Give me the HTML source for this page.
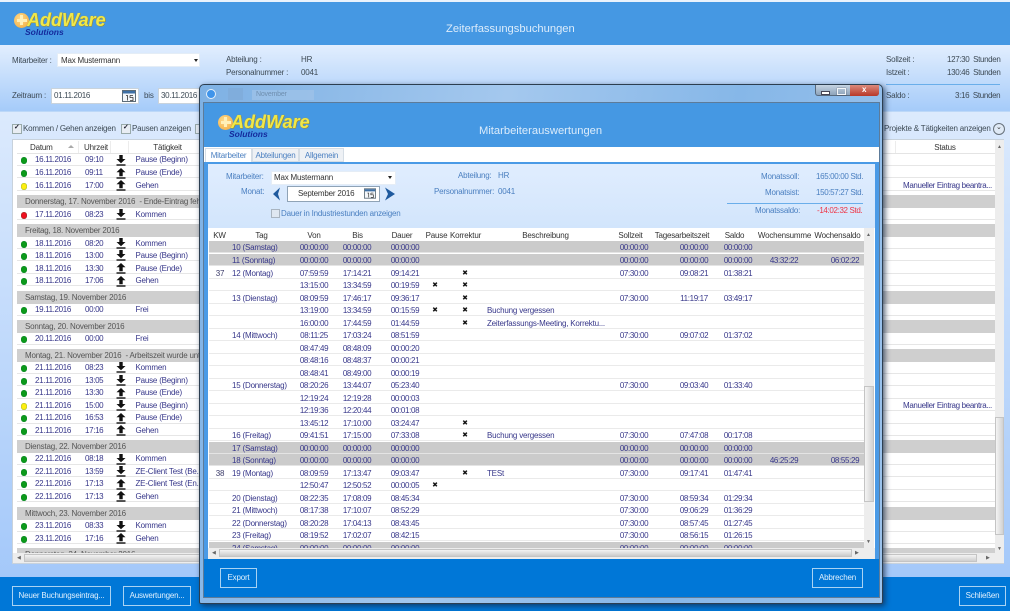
<!DOCTYPE html>
<html lang="de"><head><meta charset="utf-8"><title>Zeiterfassungsbuchungen</title>
<style>
html,body{margin:0;padding:0;width:1010px;height:611px;overflow:hidden;background:#a6ccfa}
#w{position:absolute;left:0;top:0;width:1010px;height:611px;overflow:hidden;filter:blur(.35px);font:8px/14px "Liberation Sans",sans-serif;letter-spacing:-.2px;color:#333;background:linear-gradient(#e9f2fe,#a0c6f9)}
#w div,#w span,#w svg,#w i,#w u{position:absolute}
#w span{white-space:nowrap}
i,u{font-style:normal;text-decoration:none}
.lb{color:#3d4a55}
.nm{letter-spacing:-.35px}
.btn{border:1px solid #a9d3f3;color:#dff0fd;text-align:center;box-sizing:border-box;background:#0077d7;font-size:8px;line-height:18px}
.ttl{color:#dcecfb;font-size:11.2px;line-height:16px;letter-spacing:0}
.lg1{font:italic bold 18px/20px "Liberation Sans",sans-serif;letter-spacing:0;color:#efe84a;text-shadow:.5px .5px 0 #a98a18,0 0 1px #b79a20}
.lg2{font:italic bold 8.5px/10px "Liberation Sans",sans-serif;letter-spacing:0;color:#142a9c}
.pl{width:15px;height:15px;border-radius:50%;background:radial-gradient(circle at 40% 35%,#ffd98a,#f2a93a)}
.pl:before,.pl:after{content:"";position:absolute;background:#fff0b8}
.pl:before{left:6px;top:2.500px;width:3px;height:10px}
.pl:after{left:2.500px;top:6px;width:10px;height:3px}
.fld{background:#fff;border:1px solid #c9d3dc;box-sizing:border-box}
.rw{left:17px;width:978px;height:11.5px;background:#fff;border-bottom:1px solid #e6e6e6;box-sizing:border-box}
.gr{left:17px;width:978px;height:12.5px;background:#cfcfcf;color:#555;line-height:14px;padding-left:8px;box-sizing:border-box;white-space:nowrap}
.d{left:20.750px;width:6.500px;height:6.500px;border-radius:50%;background:#0c9a1a;box-shadow:inset 0 0 1px #063}
.y{background:#ffee10}.rd{background:#f01020}
.dt{left:35px;color:#37378a;letter-spacing:-.35px}.tm{left:85px;color:#37378a;letter-spacing:-.35px}.ac{left:135.5px;color:#37378a;white-space:nowrap}
.ar{left:116px;width:10px;height:11px}
.hd{color:#333;top:0;height:14px;line-height:16px;text-align:center}
.tr{left:209px;width:655px;height:12px;background:#fff;border-bottom:1.5px solid #eaeaea;box-sizing:border-box;color:#37378a;line-height:13px}
.g{background:#cbcbcb;border-bottom-color:#e4e4e4}
.tr i{text-align:center;top:0;white-space:nowrap}
.k{left:0;width:22px;color:#3c3c6a}.t{left:23px;width:90px;text-align:left!important}
.v{left:86px;width:38px}.b{left:129px;width:38px}.u{left:177px;width:38px}
.p{left:219px;width:14px;color:#111;font-size:7px}.o{left:249px;width:14px;color:#111;font-size:7px}
.e{left:278px;width:130px;text-align:left!important}
.s{left:406px;width:38px}.a{left:466px;width:38px}.l{left:510px;width:38px}.m{left:556px;width:38px}.n{left:617px;width:38px}
.v,.b,.u,.s,.a,.l,.m,.n{letter-spacing:-.35px}
.th{top:229px;height:12px;background:#fff;color:#333;text-align:center;line-height:14px;white-space:nowrap}
.f{color:#4a7fc0}
.sc{background:#ededed}
.th2{background:linear-gradient(90deg,#f4f4f4,#d2d2d2);border:1px solid #c4c4c4;box-sizing:border-box}
.ck{color:#223;font-size:7px;font-weight:bold}
</style></head><body>
<div id="w">
<svg width="0" height="0" style="left:0;top:0"><defs>
<symbol id="dn" viewBox="0 0 10 11"><path d="M3.300 0h3.400v4H9.500L5 8.200.5 4h2.800z" fill="#111"/><rect x="0.500" y="9.300" width="9" height="1.400" fill="#111"/></symbol>
<symbol id="up" viewBox="0 0 10 11"><path d="M5 0l4.500 4.200H6.700v4H3.300v-4H.5z" fill="#111"/><rect x="0.500" y="9.300" width="9" height="1.400" fill="#111"/></symbol>
<symbol id="cal" viewBox="0 0 14 12"><rect x=".5" y=".5" width="13" height="11" fill="#f4f7fa" stroke="#5c6c78"/><rect x="1" y="1" width="12" height="2.500" fill="#3d6fa5"/><path d="M4 5.500h1.500v5M8 5.500H11M8 5.500v2h3v3H8" fill="none" stroke="#333" stroke-width=".8"/></symbol>
</defs></svg>

<!-- main window -->
<div style="left:0;top:0;width:1010px;height:2px;background:#e9f2fc"></div>
<div style="left:0;top:2px;width:1010px;height:43px;background:#4598e3"></div>
<div class="pl" style="left:14px;top:12.500px"></div>
<span class="lg1" style="left:27px;top:10px">AddWare</span>
<span class="lg2" style="left:25px;top:27px">Solutions</span>
<span class="ttl" style="left:446px;top:21px">Zeiterfassungsbuchungen</span>

<div style="left:0;top:45px;width:1010px;height:66px;background:linear-gradient(#e2eefe,#a5cbf9);border-bottom:1px solid #bcd8f8"></div>
<span class="lb" style="left:12px;top:54px">Mitarbeiter :</span>
<div class="fld" style="left:57px;top:53px;width:143px;height:14px;border-color:#e4edf6"></div>
<span style="left:61px;top:54px;color:#333">Max Mustermann</span>
<div style="left:194px;top:59px;border:2.500px solid transparent;border-top:3px solid #222;border-bottom:0"></div>
<span class="lb" style="left:226px;top:53px">Abteilung :</span><span class="lb" style="left:301px;top:53px">HR</span>
<span class="lb" style="left:226px;top:66px">Personalnummer :</span><span class="lb" style="left:301px;top:66px">0041</span>
<span class="lb" style="left:12px;top:89px">Zeitraum :</span>
<div class="fld" style="left:51px;top:88px;width:88px;height:16px"></div><span class="lb nm" style="left:54px;top:89px">01.11.2016</span>
<svg style="left:122px;top:90px" width="14" height="12"><use href="#cal"/></svg>
<span class="lb" style="left:144px;top:89px">bis</span>
<div class="fld" style="left:158px;top:88px;width:60px;height:16px"></div><span class="lb nm" style="left:161px;top:89px">30.11.2016</span>
<span class="lb" style="left:886px;top:53px">Sollzeit :</span><span class="lb nm" style="left:947px;top:53px">127:30&nbsp; Stunden</span>
<span class="lb" style="left:886px;top:66px">Istzeit :</span><span class="lb nm" style="left:947px;top:66px">130:46&nbsp; Stunden</span>
<div style="left:886px;top:84px;width:114px;height:1px;background:#6aaeea"></div>
<span class="lb" style="left:886px;top:89px">Saldo :</span><span class="lb nm" style="left:955px;top:89px">3:16&nbsp; Stunden</span>

<div style="left:12px;top:124px;width:8px;height:8px;border:1px solid #9aa;background:#e8edf3"></div><span class="ck" style="left:14px;top:121px">✓</span>
<span class="lb" style="left:23px;top:122px">Kommen / Gehen anzeigen</span>
<div style="left:121px;top:124px;width:8px;height:8px;border:1px solid #9aa;background:#e8edf3"></div><span class="ck" style="left:123px;top:121px">✓</span>
<span class="lb" style="left:132px;top:122px">Pausen anzeigen</span>
<div style="left:195px;top:124px;width:8px;height:8px;border:1px solid #9aa;background:#e8edf3"></div>
<span class="lb" style="left:884px;top:122px">Projekte &amp; Tätigkeiten anzeigen</span>
<div style="left:993px;top:123px;width:10px;height:10px;border:1px solid #66707a;border-radius:50%;background:#dfe9f5"></div>
<span style="left:996px;top:121px;color:#333;font-size:7px">⌄</span>

<!-- main list -->
<div style="left:12px;top:139px;width:992px;height:425px;background:#fff;border:1px solid #c8d2dc;box-sizing:border-box"></div>
<span class="hd" style="left:30px;top:140px;width:48px;position:absolute;text-align:left">Datum</span>
<div style="left:68px;top:145px;border:3px solid transparent;border-bottom:3px solid #aaa;border-top:0"></div>
<span class="hd" style="left:82px;top:140px;width:28px;position:absolute">Uhrzeit</span>
<span class="hd" style="left:130px;top:140px;width:75px;position:absolute">Tätigkeit</span>
<span class="hd" style="left:895px;top:140px;width:100px;position:absolute">Status</span>
<div style="left:78px;top:141px;width:1px;height:12px;background:#ececec"></div>
<div style="left:110px;top:141px;width:1px;height:12px;background:#ececec"></div>
<div style="left:128px;top:141px;width:1px;height:12px;background:#ececec"></div>
<div style="left:895px;top:141px;width:1px;height:12px;background:#ececec"></div>
<div style="left:17px;top:153px;width:978px;height:1px;background:#e4e4e4"></div>

<div class="rw" style="top:154px"></div><i class="d" style="top:157px"></i><span class="dt" style="top:153px">16.11.2016</span><span class="tm" style="top:153px">09:10</span><svg class="ar" style="top:155px"><use href="#dn"/></svg><span class="ac" style="top:153px">Pause (Beginn)</span>
<div class="rw" style="top:166.500px"></div><i class="d" style="top:170px"></i><span class="dt" style="top:166px">16.11.2016</span><span class="tm" style="top:166px">09:11</span><svg class="ar" style="top:168px"><use href="#up"/></svg><span class="ac" style="top:166px">Pause (Ende)</span>
<div class="rw" style="top:179px"></div><i class="d y" style="top:183px"></i><span class="dt" style="top:179px">16.11.2016</span><span class="tm" style="top:179px">17:00</span><svg class="ar" style="top:180px"><use href="#up"/></svg><span class="ac" style="top:179px">Gehen</span><span class="nm" style="left:903px;top:179px;color:#37378a">Manueller Eintrag beantra...</span>
<div class="gr" style="top:195px">Donnerstag, 17. November 2016&nbsp; - Ende-Eintrag fehlt</div>
<div class="rw" style="top:208px"></div><i class="d rd" style="top:212px"></i><span class="dt" style="top:208px">17.11.2016</span><span class="tm" style="top:208px">08:23</span><svg class="ar" style="top:209px"><use href="#dn"/></svg><span class="ac" style="top:208px">Kommen</span>
<div class="gr" style="top:224px">Freitag, 18. November 2016</div>
<div class="rw" style="top:237px"></div><i class="d" style="top:241px"></i><span class="dt" style="top:237px">18.11.2016</span><span class="tm" style="top:237px">08:20</span><svg class="ar" style="top:238px"><use href="#dn"/></svg><span class="ac" style="top:237px">Kommen</span>
<div class="rw" style="top:249.500px"></div><i class="d" style="top:253px"></i><span class="dt" style="top:249px">18.11.2016</span><span class="tm" style="top:249px">13:00</span><svg class="ar" style="top:250px"><use href="#dn"/></svg><span class="ac" style="top:249px">Pause (Beginn)</span>
<div class="rw" style="top:262px"></div><i class="d" style="top:266px"></i><span class="dt" style="top:262px">18.11.2016</span><span class="tm" style="top:262px">13:30</span><svg class="ar" style="top:263px"><use href="#up"/></svg><span class="ac" style="top:262px">Pause (Ende)</span>
<div class="rw" style="top:274.500px"></div><i class="d" style="top:278px"></i><span class="dt" style="top:274px">18.11.2016</span><span class="tm" style="top:274px">17:06</span><svg class="ar" style="top:276px"><use href="#up"/></svg><span class="ac" style="top:274px">Gehen</span>
<div class="gr" style="top:291px">Samstag, 19. November 2016</div>
<div class="rw" style="top:304px"></div><i class="d" style="top:307px"></i><span class="dt" style="top:303px">19.11.2016</span><span class="tm" style="top:303px">00:00</span><span class="ac" style="top:303px">Frei</span>
<div class="gr" style="top:320px">Sonntag, 20. November 2016</div>
<div class="rw" style="top:333px"></div><i class="d" style="top:336px"></i><span class="dt" style="top:332px">20.11.2016</span><span class="tm" style="top:332px">00:00</span><span class="ac" style="top:332px">Frei</span>
<div class="gr" style="top:349px">Montag, 21. November 2016&nbsp; - Arbeitszeit wurde unterbrochen</div>
<div class="rw" style="top:362px"></div><i class="d" style="top:365px"></i><span class="dt" style="top:361px">21.11.2016</span><span class="tm" style="top:361px">08:23</span><svg class="ar" style="top:362px"><use href="#dn"/></svg><span class="ac" style="top:361px">Kommen</span>
<div class="rw" style="top:374.500px"></div><i class="d" style="top:378px"></i><span class="dt" style="top:374px">21.11.2016</span><span class="tm" style="top:374px">13:05</span><svg class="ar" style="top:375px"><use href="#dn"/></svg><span class="ac" style="top:374px">Pause (Beginn)</span>
<div class="rw" style="top:387px"></div><i class="d" style="top:390px"></i><span class="dt" style="top:386px">21.11.2016</span><span class="tm" style="top:386px">13:30</span><svg class="ar" style="top:388px"><use href="#up"/></svg><span class="ac" style="top:386px">Pause (Ende)</span>
<div class="rw" style="top:399.500px"></div><i class="d y" style="top:403px"></i><span class="dt" style="top:399px">21.11.2016</span><span class="tm" style="top:399px">15:00</span><svg class="ar" style="top:400px"><use href="#dn"/></svg><span class="ac" style="top:399px">Pause (Beginn)</span><span class="nm" style="left:903px;top:399px;color:#37378a">Manueller Eintrag beantra...</span>
<div class="rw" style="top:412px"></div><i class="d" style="top:415px"></i><span class="dt" style="top:411px">21.11.2016</span><span class="tm" style="top:411px">16:53</span><svg class="ar" style="top:413px"><use href="#up"/></svg><span class="ac" style="top:411px">Pause (Ende)</span>
<div class="rw" style="top:424.500px"></div><i class="d" style="top:428px"></i><span class="dt" style="top:424px">21.11.2016</span><span class="tm" style="top:424px">17:16</span><svg class="ar" style="top:425px"><use href="#up"/></svg><span class="ac" style="top:424px">Gehen</span>
<div class="gr" style="top:440px">Dienstag, 22. November 2016</div>
<div class="rw" style="top:453px"></div><i class="d" style="top:456px"></i><span class="dt" style="top:452px">22.11.2016</span><span class="tm" style="top:452px">08:18</span><svg class="ar" style="top:454px"><use href="#dn"/></svg><span class="ac" style="top:452px">Kommen</span>
<div class="rw" style="top:465.500px"></div><i class="d" style="top:469px"></i><span class="dt" style="top:465px">22.11.2016</span><span class="tm" style="top:465px">13:59</span><svg class="ar" style="top:466px"><use href="#dn"/></svg><span class="ac" style="top:465px">ZE-Client Test (Be...</span>
<div class="rw" style="top:478px"></div><i class="d" style="top:481px"></i><span class="dt" style="top:477px">22.11.2016</span><span class="tm" style="top:477px">17:13</span><svg class="ar" style="top:479px"><use href="#up"/></svg><span class="ac" style="top:477px">ZE-Client Test (En...</span>
<div class="rw" style="top:490.500px"></div><i class="d" style="top:494px"></i><span class="dt" style="top:490px">22.11.2016</span><span class="tm" style="top:490px">17:13</span><svg class="ar" style="top:491px"><use href="#up"/></svg><span class="ac" style="top:490px">Gehen</span>
<div class="gr" style="top:507px">Mittwoch, 23. November 2016</div>
<div class="rw" style="top:520px"></div><i class="d" style="top:523px"></i><span class="dt" style="top:519px">23.11.2016</span><span class="tm" style="top:519px">08:33</span><svg class="ar" style="top:521px"><use href="#dn"/></svg><span class="ac" style="top:519px">Kommen</span>
<div class="rw" style="top:532.500px"></div><i class="d" style="top:536px"></i><span class="dt" style="top:532px">23.11.2016</span><span class="tm" style="top:532px">17:16</span><svg class="ar" style="top:533px"><use href="#up"/></svg><span class="ac" style="top:532px">Gehen</span>
<div class="gr" style="top:548px;height:6px;overflow:hidden">Donnerstag, 24. November 2016</div>

<div class="sc" style="left:995px;top:140px;width:9px;height:423px"></div>
<div class="th2" style="left:995px;top:417px;width:9px;height:118px"></div>
<span style="left:997px;top:140px;font-size:5px;color:#666">▲</span>
<span style="left:997px;top:542px;font-size:5px;color:#666">▼</span>
<div class="sc" style="left:13px;top:553px;width:982px;height:10px"></div>
<div style="left:24px;top:554px;width:953px;height:8px;background:linear-gradient(#f3f3f3,#cfcfcf);border:1px solid #c4c4c4;box-sizing:border-box"></div>
<span style="left:17px;top:551px;font-size:5px;color:#666">◀</span>
<span style="left:986px;top:551px;font-size:5px;color:#666">▶</span>

<!-- main footer -->
<div style="left:0;top:577px;width:1010px;height:34px;background:#0077d7"></div>
<div class="btn" style="left:12px;top:586px;width:99px;height:20px">Neuer Buchungseintrag...</div>
<div class="btn" style="left:123px;top:586px;width:68px;height:20px">Auswertungen...</div>
<div class="btn" style="left:959px;top:586px;width:47px;height:20px">Schließen</div>

<!-- dialog -->
<div style="left:199px;top:84px;width:684px;height:520px;border-radius:5px 5px 2px 2px;background:linear-gradient(100deg,#7eb1e4,#a4c8ee 40%,#86b7e8 70%,#9cc3ec);border:1px solid #2c3e50;box-sizing:border-box;box-shadow:2px 2px 6px rgba(20,40,70,.75)"></div>
<div style="left:206px;top:89px;width:8px;height:8px;border-radius:50%;background:#3f94ea;border:1px solid #e4f0fb"></div>
<div style="left:228px;top:88px;width:15px;height:12px;background:#7ea9d6;opacity:.6"></div>
<div style="left:252px;top:90px;width:62px;height:10px;background:#9fc3e8;opacity:.7"></div>
<span style="left:256px;top:88px;color:#6f8fb0;font-size:7px">November</span>
<div style="left:815px;top:85px;width:64px;height:11px;background:linear-gradient(#c5d3e2,#8da3ba);border:1px solid #56687c;border-top:0;border-radius:0 0 3px 3px;box-sizing:border-box"></div>
<div style="left:850px;top:85px;width:29px;height:11px;background:linear-gradient(#dc8a7c,#b83828);border-radius:0 0 3px 0"></div>
<div style="left:821px;top:91px;width:7px;height:2px;background:#fff;border:.5px solid #445"></div>
<div style="left:837px;top:88px;width:7px;height:5px;background:transparent;border:1px solid #f2f5f8;box-shadow:0 0 1px #445"></div>
<span style="left:862px;top:83px;color:#fff;font-weight:bold;font-size:8px">x</span>

<div style="left:204px;top:103px;width:675px;height:494px;background:#fff;outline:1px solid #5d7b99"></div>
<div style="left:204px;top:103px;width:675px;height:44px;background:#4598e3"></div>
<div class="pl" style="left:218px;top:114.500px"></div>
<span class="lg1" style="left:231px;top:112px">AddWare</span>
<span class="lg2" style="left:229px;top:129px">Solutions</span>
<span class="ttl" style="left:479px;top:123px">Mitarbeiterauswertungen</span>

<div style="left:205px;top:148px;width:47px;height:15px;background:#fff;border:1px solid #d5dde5;border-bottom:0;box-sizing:border-box;color:#4a7fc0;text-align:center;line-height:14px">Mitarbeiter</div>
<div style="left:252px;top:148px;width:47px;height:14px;background:#eef1f5;border:1px solid #d5dde5;box-sizing:border-box;color:#4a7fc0;text-align:center;line-height:14px">Abteilungen</div>
<div style="left:299px;top:148px;width:45px;height:14px;background:#eef1f5;border:1px solid #d5dde5;box-sizing:border-box;color:#4a7fc0;text-align:center;line-height:14px">Allgemein</div>

<div style="left:204px;top:162px;width:675px;height:398px;background:#4a9ae6"></div>
<div style="left:208px;top:164px;width:667px;height:64px;background:linear-gradient(#e0edfe,#d2e5fc)"></div>
<span class="f" style="left:226px;top:170px">Mitarbeiter:</span>
<div class="fld" style="left:271px;top:171px;width:125px;height:14px;border-color:#e5edf6"></div>
<span style="left:274px;top:171px;color:#333">Max Mustermann</span>
<div style="left:388px;top:176px;border:2.500px solid transparent;border-top:3px solid #222;border-bottom:0"></div>
<span class="f" style="left:241px;top:185px">Monat:</span>
<svg style="left:272px;top:187px" width="10" height="14"><path d="M8 .5L1 7l7 6.500L6 7z" fill="#1f5a9e"/></svg>
<svg style="left:384px;top:187px" width="12" height="14"><path d="M1 .5L11 7 1 13.500 4 7z" fill="#1f5a9e"/></svg>
<div class="fld" style="left:287px;top:186px;width:93px;height:16px;border-color:#8fa3b6"></div>
<span style="left:298px;top:187px;color:#333">September 2016</span>
<svg style="left:364px;top:188px" width="12" height="11"><use href="#cal"/></svg>
<div style="left:271px;top:209px;width:7px;height:7px;border:1px solid #a9b4c0;background:#dfe7f1"></div>
<span class="f" style="left:281px;top:207px">Dauer in Industriestunden anzeigen</span>
<span class="f" style="left:458px;top:169px">Abteilung:</span><span class="f" style="left:498px;top:169px">HR</span>
<span class="f" style="left:434px;top:185px">Personalnummer:</span><span class="f" style="left:498px;top:185px">0041</span>
<span class="f" style="left:761px;top:170px">Monatssoll:</span><span class="f nm" style="left:816px;top:170px">165:00:00 Std.</span>
<span class="f" style="left:765px;top:186px">Monatsist:</span><span class="f nm" style="left:816px;top:186px">150:57:27 Std.</span>
<div style="left:727px;top:203px;width:136px;height:1px;background:#6aaeea"></div>
<span class="f" style="left:755px;top:204px">Monatssaldo:</span><span class="nm" style="left:817px;top:204px;color:#ef3344">-14:02:32 Std.</span>

<!-- dialog table -->
<div style="left:208px;top:228px;width:667px;height:331px;background:#fff"></div>
<div class="th" style="left:209px;width:21px">KW</div>
<div class="th" style="left:231px;width:61px">Tag</div>
<div class="th" style="left:293px;width:42px">Von</div>
<div class="th" style="left:336px;width:43px">Bis</div>
<div class="th" style="left:380px;width:44px">Dauer</div>
<div class="th" style="left:425px;width:23px">Pause</div>
<div class="th" style="left:449px;width:33px">Korrektur</div>
<div class="th" style="left:483px;width:125px">Beschreibung</div>
<div class="th" style="left:609px;width:43px">Sollzeit</div>
<div class="th" style="left:653px;width:58px">Tagesarbeitszeit</div>
<div class="th" style="left:713px;width:43px">Saldo</div>
<div class="th" style="left:757px;width:55px">Wochensumme</div>
<div class="th" style="left:813px;width:49px">Wochensaldo</div>

<div class="tr g" style="top:241px"><i class="t">10 (Samstag)</i><i class="v">00:00:00</i><i class="b">00:00:00</i><i class="u">00:00:00</i><i class="s">00:00:00</i><i class="a">00:00:00</i><i class="l">00:00:00</i></div>
<div class="tr g" style="top:254px"><i class="t">11 (Sonntag)</i><i class="v">00:00:00</i><i class="b">00:00:00</i><i class="u">00:00:00</i><i class="s">00:00:00</i><i class="a">00:00:00</i><i class="l">00:00:00</i><i class="m">43:32:22</i><i class="n">06:02:22</i></div>
<div class="tr" style="top:266.500px"><i class="k">37</i><i class="t">12 (Montag)</i><i class="v">07:59:59</i><i class="b">17:14:21</i><i class="u">09:14:21</i><i class="o">✖</i><i class="s">07:30:00</i><i class="a">09:08:21</i><i class="l">01:38:21</i></div>
<div class="tr" style="top:279px"><i class="v">13:15:00</i><i class="b">13:34:59</i><i class="u">00:19:59</i><i class="p">✖</i><i class="o">✖</i></div>
<div class="tr" style="top:291.500px"><i class="t">13 (Dienstag)</i><i class="v">08:09:59</i><i class="b">17:46:17</i><i class="u">09:36:17</i><i class="o">✖</i><i class="s">07:30:00</i><i class="a">11:19:17</i><i class="l">03:49:17</i></div>
<div class="tr" style="top:304px"><i class="v">13:19:00</i><i class="b">13:34:59</i><i class="u">00:15:59</i><i class="p">✖</i><i class="o">✖</i><i class="e">Buchung vergessen</i></div>
<div class="tr" style="top:316.500px"><i class="v">16:00:00</i><i class="b">17:44:59</i><i class="u">01:44:59</i><i class="o">✖</i><i class="e">Zeiterfassungs-Meeting, Korrektu...</i></div>
<div class="tr" style="top:329px"><i class="t">14 (Mittwoch)</i><i class="v">08:11:25</i><i class="b">17:03:24</i><i class="u">08:51:59</i><i class="s">07:30:00</i><i class="a">09:07:02</i><i class="l">01:37:02</i></div>
<div class="tr" style="top:341.500px"><i class="v">08:47:49</i><i class="b">08:48:09</i><i class="u">00:00:20</i></div>
<div class="tr" style="top:354px"><i class="v">08:48:16</i><i class="b">08:48:37</i><i class="u">00:00:21</i></div>
<div class="tr" style="top:366.500px"><i class="v">08:48:41</i><i class="b">08:49:00</i><i class="u">00:00:19</i></div>
<div class="tr" style="top:379px"><i class="t">15 (Donnerstag)</i><i class="v">08:20:26</i><i class="b">13:44:07</i><i class="u">05:23:40</i><i class="s">07:30:00</i><i class="a">09:03:40</i><i class="l">01:33:40</i></div>
<div class="tr" style="top:391.500px"><i class="v">12:19:24</i><i class="b">12:19:28</i><i class="u">00:00:03</i></div>
<div class="tr" style="top:404px"><i class="v">12:19:36</i><i class="b">12:20:44</i><i class="u">00:01:08</i></div>
<div class="tr" style="top:416.500px"><i class="v">13:45:12</i><i class="b">17:10:00</i><i class="u">03:24:47</i><i class="o">✖</i></div>
<div class="tr" style="top:429px"><i class="t">16 (Freitag)</i><i class="v">09:41:51</i><i class="b">17:15:00</i><i class="u">07:33:08</i><i class="o">✖</i><i class="e">Buchung vergessen</i><i class="s">07:30:00</i><i class="a">07:47:08</i><i class="l">00:17:08</i></div>
<div class="tr g" style="top:441.500px"><i class="t">17 (Samstag)</i><i class="v">00:00:00</i><i class="b">00:00:00</i><i class="u">00:00:00</i><i class="s">00:00:00</i><i class="a">00:00:00</i><i class="l">00:00:00</i></div>
<div class="tr g" style="top:454px"><i class="t">18 (Sonntag)</i><i class="v">00:00:00</i><i class="b">00:00:00</i><i class="u">00:00:00</i><i class="s">00:00:00</i><i class="a">00:00:00</i><i class="l">00:00:00</i><i class="m">46:25:29</i><i class="n">08:55:29</i></div>
<div class="tr" style="top:466.500px"><i class="k">38</i><i class="t">19 (Montag)</i><i class="v">08:09:59</i><i class="b">17:13:47</i><i class="u">09:03:47</i><i class="o">✖</i><i class="e">TESt</i><i class="s">07:30:00</i><i class="a">09:17:41</i><i class="l">01:47:41</i></div>
<div class="tr" style="top:479px"><i class="v">12:50:47</i><i class="b">12:50:52</i><i class="u">00:00:05</i><i class="p">✖</i></div>
<div class="tr" style="top:491.500px"><i class="t">20 (Dienstag)</i><i class="v">08:22:35</i><i class="b">17:08:09</i><i class="u">08:45:34</i><i class="s">07:30:00</i><i class="a">08:59:34</i><i class="l">01:29:34</i></div>
<div class="tr" style="top:504px"><i class="t">21 (Mittwoch)</i><i class="v">08:17:38</i><i class="b">17:10:07</i><i class="u">08:52:29</i><i class="s">07:30:00</i><i class="a">09:06:29</i><i class="l">01:36:29</i></div>
<div class="tr" style="top:516.500px"><i class="t">22 (Donnerstag)</i><i class="v">08:20:28</i><i class="b">17:04:13</i><i class="u">08:43:45</i><i class="s">07:30:00</i><i class="a">08:57:45</i><i class="l">01:27:45</i></div>
<div class="tr" style="top:529px"><i class="t">23 (Freitag)</i><i class="v">08:19:52</i><i class="b">17:02:07</i><i class="u">08:42:15</i><i class="s">07:30:00</i><i class="a">08:56:15</i><i class="l">01:26:15</i></div>
<div class="tr g" style="top:542px;height:6px;overflow:hidden;border:0"><i class="t">24 (Samstag)</i><i class="v">00:00:00</i><i class="b">00:00:00</i><i class="u">00:00:00</i><i class="s">00:00:00</i><i class="a">00:00:00</i><i class="l">00:00:00</i></div>

<div class="sc" style="left:864px;top:228px;width:10px;height:320px"></div>
<div class="th2" style="left:864px;top:386px;width:10px;height:116px"></div>
<span style="left:866px;top:228px;font-size:5px;color:#666">▲</span>
<span style="left:866px;top:535px;font-size:5px;color:#666">▼</span>
<div class="sc" style="left:208px;top:548px;width:667px;height:11px"></div>
<div style="left:219px;top:549px;width:633px;height:8px;background:linear-gradient(#f3f3f3,#cbcbcb);border:1px solid #c4c4c4;box-sizing:border-box"></div>
<span style="left:212px;top:546px;font-size:5px;color:#666">◀</span>
<span style="left:855px;top:546px;font-size:5px;color:#666">▶</span>

<div style="left:204px;top:559px;width:675px;height:38px;background:#0077d7"></div>
<div class="btn" style="left:220px;top:568px;width:37px;height:20px">Export</div>
<div class="btn" style="left:812px;top:568px;width:51px;height:20px">Abbrechen</div>
</div>
</body></html>
